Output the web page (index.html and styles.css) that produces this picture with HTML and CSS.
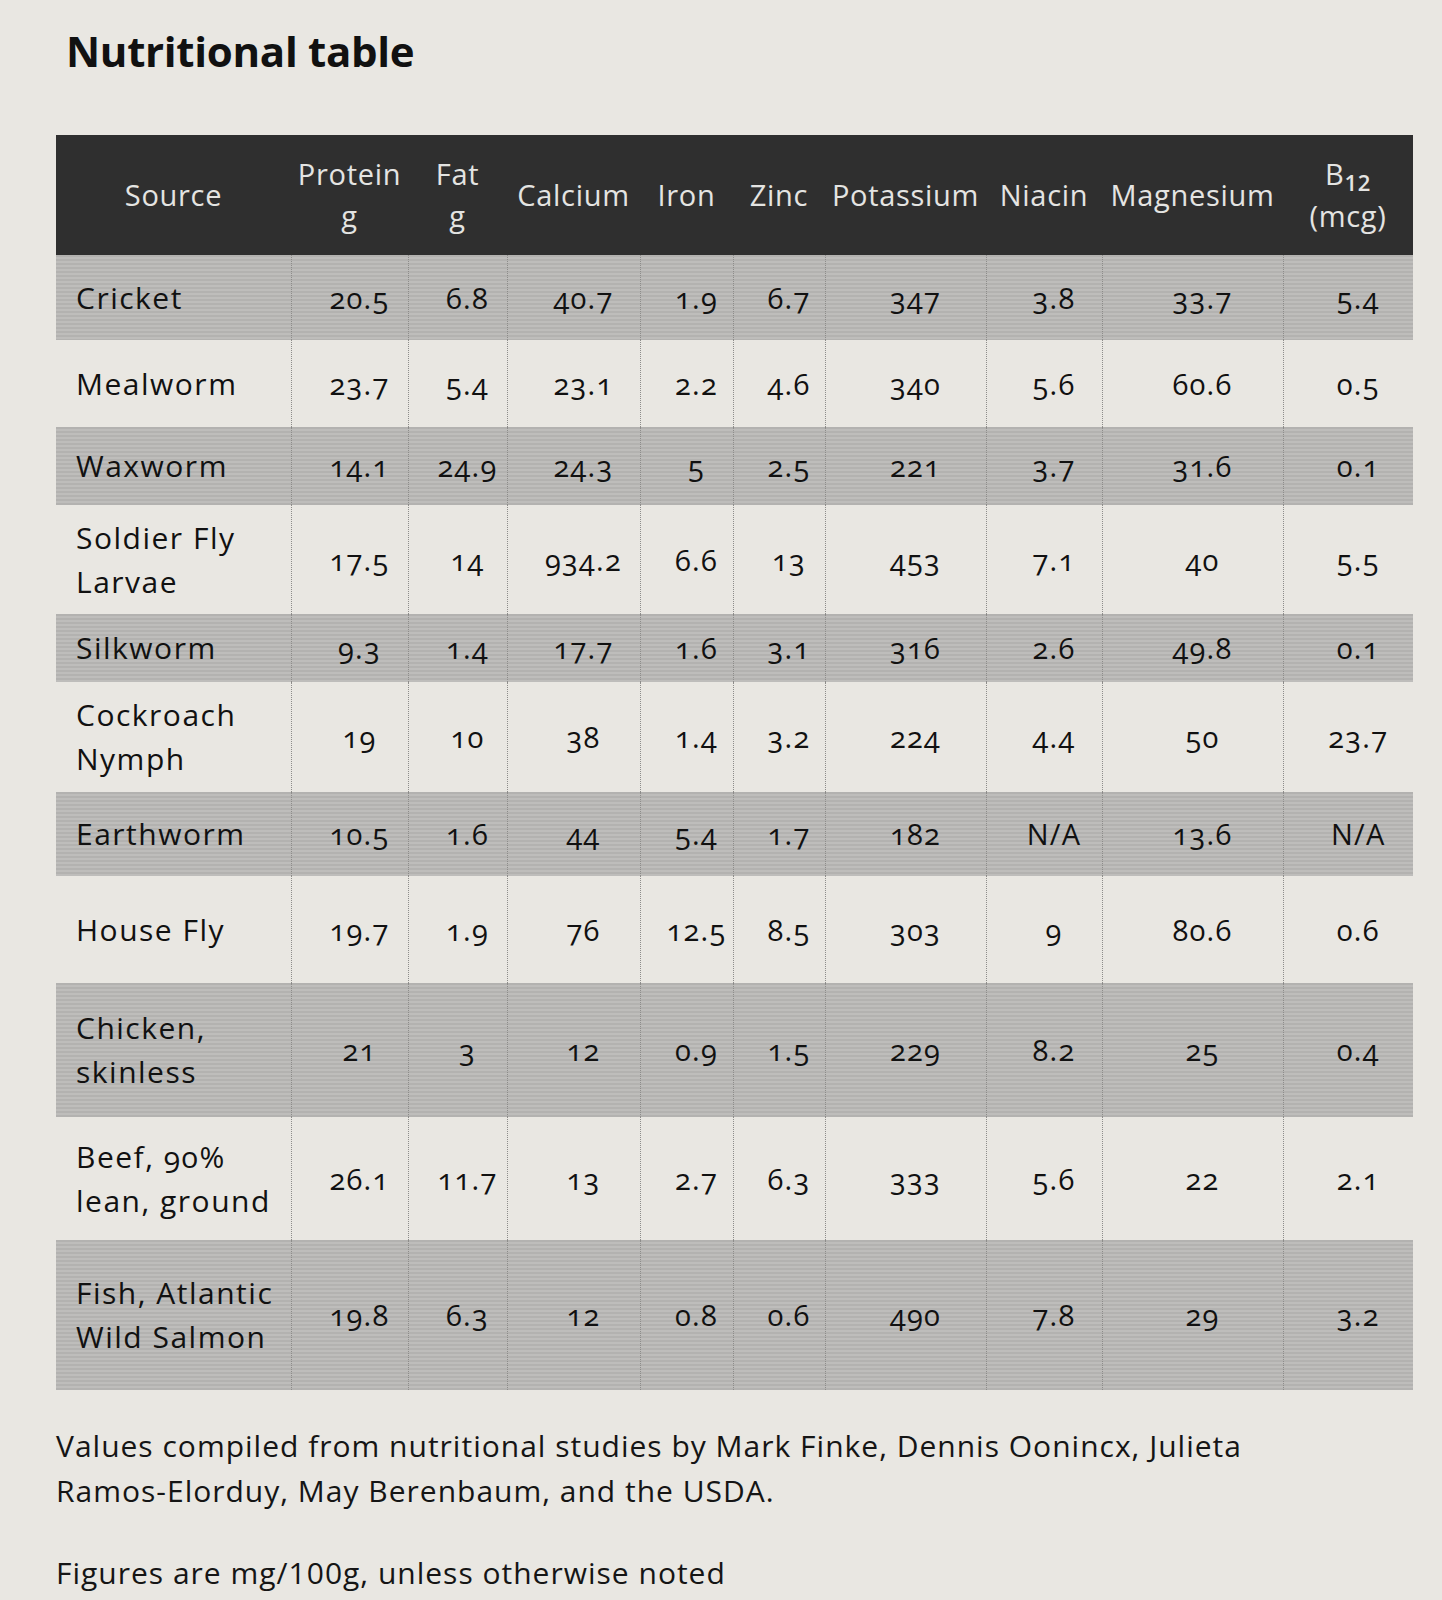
FILE: index.html
```html
<!DOCTYPE html>
<html lang="en">
<head>
<meta charset="utf-8">
<title>Nutritional table</title>
<link rel="stylesheet" href="styles.css">
</head>
<body>
<main class="page">
  <h1 class="title">Nutritional table</h1>
  <table class="nutri">
    <colgroup>
      <col class="c-src"><col class="c-pro"><col class="c-fat"><col class="c-cal"><col class="c-iron">
      <col class="c-zinc"><col class="c-pot"><col class="c-nia"><col class="c-mag"><col class="c-b12">
    </colgroup>
    <thead>
      <tr>
        <th>Source</th>
        <th>Protein<br>g</th>
        <th>Fat<br>g</th>
        <th>Calcium</th>
        <th>Iron</th>
        <th>Zinc</th>
        <th>Potassium</th>
        <th>Niacin</th>
        <th>Magnesium</th>
        <th>B<sub>12</sub><br>(mcg)</th>
      </tr>
    </thead>
    <tbody>
      <tr class="shade"><td>Cricket</td><td>20.5</td><td>6.8</td><td>40.7</td><td>1.9</td><td>6.7</td><td>347</td><td>3.8</td><td>33.7</td><td>5.4</td></tr>
      <tr><td>Mealworm</td><td>23.7</td><td>5.4</td><td>23.1</td><td>2.2</td><td>4.6</td><td>340</td><td>5.6</td><td>60.6</td><td>0.5</td></tr>
      <tr class="shade"><td>Waxworm</td><td>14.1</td><td>24.9</td><td>24.3</td><td>5</td><td>2.5</td><td>221</td><td>3.7</td><td>31.6</td><td>0.1</td></tr>
      <tr><td>Soldier Fly<br>Larvae</td><td>17.5</td><td>14</td><td>934.2</td><td>6.6</td><td>13</td><td>453</td><td>7.1</td><td>40</td><td>5.5</td></tr>
      <tr class="shade"><td>Silkworm</td><td>9.3</td><td>1.4</td><td>17.7</td><td>1.6</td><td>3.1</td><td>316</td><td>2.6</td><td>49.8</td><td>0.1</td></tr>
      <tr><td>Cockroach<br>Nymph</td><td>19</td><td>10</td><td>38</td><td>1.4</td><td>3.2</td><td>224</td><td>4.4</td><td>50</td><td>23.7</td></tr>
      <tr class="shade"><td>Earthworm</td><td>10.5</td><td>1.6</td><td>44</td><td>5.4</td><td>1.7</td><td>182</td><td>N/A</td><td>13.6</td><td>N/A</td></tr>
      <tr><td>House Fly</td><td>19.7</td><td>1.9</td><td>76</td><td>12.5</td><td>8.5</td><td>303</td><td>9</td><td>80.6</td><td>0.6</td></tr>
      <tr class="shade"><td>Chicken,<br>skinless</td><td>21</td><td>3</td><td>12</td><td>0.9</td><td>1.5</td><td>229</td><td>8.2</td><td>25</td><td>0.4</td></tr>
      <tr><td>Beef, 90%<br>lean, ground</td><td>26.1</td><td>11.7</td><td>13</td><td>2.7</td><td>6.3</td><td>333</td><td>5.6</td><td>22</td><td>2.1</td></tr>
      <tr class="shade"><td>Fish, Atlantic<br>Wild Salmon</td><td>19.8</td><td>6.3</td><td>12</td><td>0.8</td><td>0.6</td><td>490</td><td>7.8</td><td>29</td><td>3.2</td></tr>
    </tbody>
  </table>
  <p class="note">Values compiled from nutritional studies by Mark Finke, Dennis Oonincx, Julieta<br>Ramos-Elorduy, May Berenbaum, and the USDA.</p>
  <p class="note note-last">Figures are mg/100g, unless otherwise noted</p>
</main>
</body>
</html>
```

FILE: styles.css
```css
html, body {
  margin: 0;
  padding: 0;
}

body {
  background: #e9e7e2;
  color: #141414;
  font-family: "Open Sans", "DejaVu Sans", sans-serif;
}

.page {
  padding: 20px 0 0 56px;
  width: 1357px;
}

.title {
  margin: 0 0 0 10px;
  font-size: 42px;
  line-height: 62px;
  font-weight: 700;
  color: #111;
  letter-spacing: -0.3px;
}

.nutri {
  margin-top: 53px;
  width: 1357px;
  border-collapse: collapse;
  table-layout: fixed;
}

.c-src  { width: 235px; }
.c-pro  { width: 117px; }
.c-fat  { width: 99px; }
.c-cal  { width: 133px; }
.c-iron { width: 93px; }
.c-zinc { width: 92px; }
.c-pot  { width: 161px; }
.c-nia  { width: 116px; }
.c-mag  { width: 181px; }
.c-b12  { width: 130px; }

.nutri thead tr {
  height: 120px;
  background: #2f2f2f;
}

.nutri th {
  padding: 0;
  color: #e4e4e2;
  font-weight: 400;
  font-size: 29px;
  line-height: 42px;
  letter-spacing: 0.7px;
  text-align: center;
  vertical-align: middle;
  white-space: nowrap;
}

.nutri th sub {
  font-size: 22px;
  font-weight: 600;
  vertical-align: -6px;
  line-height: 0;
}

.nutri td {
  padding: 0 0 0 20px;
  font-size: 29px;
  font-weight: 500;
  line-height: 44px;
  letter-spacing: 1.2px;
  text-align: center;
  vertical-align: middle;
  border-left: 1px dotted #8d8c8a;
  font-variant-numeric: oldstyle-nums;
  color: #111;
  white-space: nowrap;
}

.nutri td:first-child {
  border-left: none;
  text-align: left;
  padding-left: 20px;
  font-size: 30px;
  letter-spacing: 1.5px;
}

.nutri tbody tr.shade {
  background: repeating-linear-gradient(180deg, #b3b2b0 0 2px, #bebdbb 2px 4px);
}

.nutri tbody tr:nth-child(1)  { height: 85px; }
.nutri tbody tr:nth-child(2)  { height: 87px; }
.nutri tbody tr:nth-child(3)  { height: 78px; }
.nutri tbody tr:nth-child(4)  { height: 109px; }
.nutri tbody tr:nth-child(5)  { height: 68px; }
.nutri tbody tr:nth-child(6)  { height: 110px; }
.nutri tbody tr:nth-child(7)  { height: 84px; }
.nutri tbody tr:nth-child(8)  { height: 107px; }
.nutri tbody tr:nth-child(9)  { height: 134px; }
.nutri tbody tr:nth-child(10) { height: 123px; }
.nutri tbody tr:nth-child(11) { height: 150px; }

.note {
  margin: 33px 0 0 0;
  font-size: 30px;
  line-height: 45px;
  letter-spacing: 1px;
  color: #151515;
  white-space: nowrap;
}

.note-last {
  margin-top: 37px;
}
```
